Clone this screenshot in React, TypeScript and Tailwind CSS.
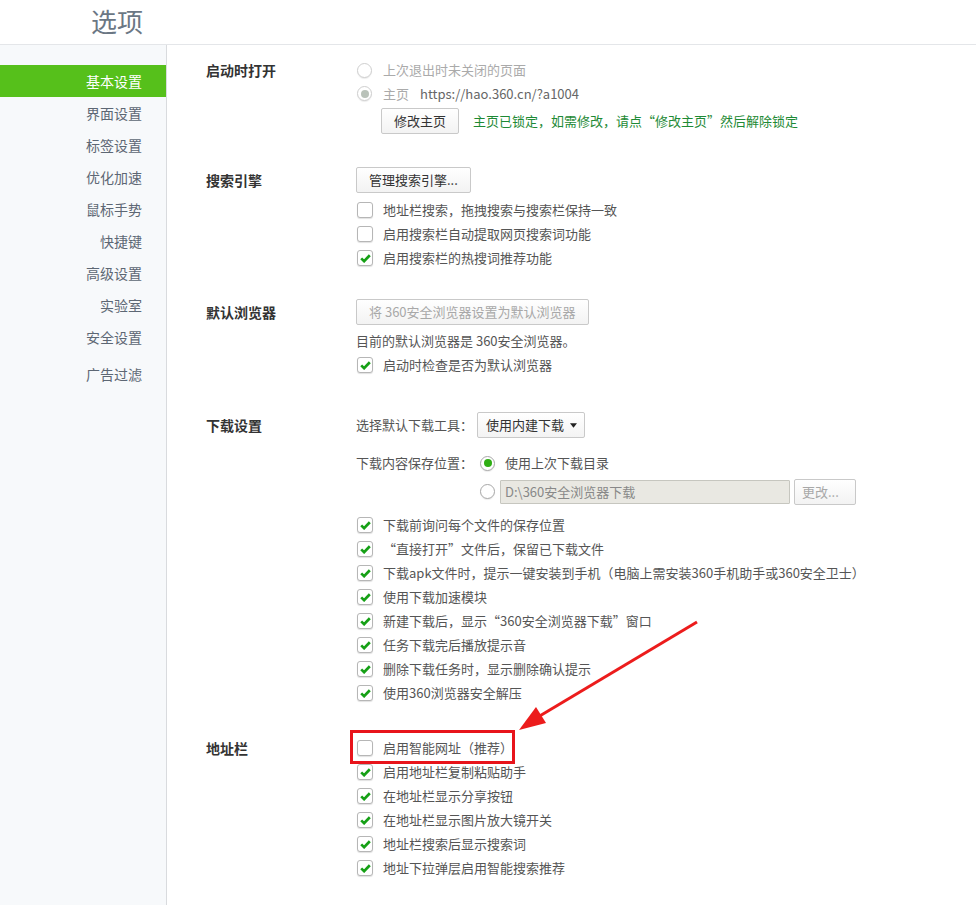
import React from 'react';

const FONT = { fontFamily: '"Microsoft YaHei", "Noto Sans CJK SC", "Noto Sans", sans-serif' };

const navItems = ['基本设置', '界面设置', '标签设置', '优化加速', '鼠标手势', '快捷键', '高级设置', '实验室', '安全设置'];

const downloadOptions = [
  '下载前询问每个文件的保存位置',
  '“直接打开”文件后，保留已下载文件',
  '下载apk文件时，提示一键安装到手机（电脑上需安装360手机助手或360安全卫士）',
  '使用下载加速模块',
  '新建下载后，显示“360安全浏览器下载”窗口',
  '任务下载完后播放提示音',
  '删除下载任务时，显示删除确认提示',
  '使用360浏览器安全解压',
];

const addressOptions = [
  '启用地址栏复制粘贴助手',
  '在地址栏显示分享按钮',
  '在地址栏显示图片放大镜开关',
  '地址栏搜索后显示搜索词',
  '地址下拉弹层启用智能搜索推荐',
];

const Checkbox: React.FC<{ checked?: boolean }> = ({ checked }) => (
  <span className="w-[16px] h-[16px] shrink-0 rounded-[3px] border border-[#b6b6b6] bg-white shadow-[0_1px_1px_rgba(0,0,0,0.12)] flex items-center justify-center">
    {checked && (
      <svg width="11" height="9" viewBox="0 0 11 9">
        <path d="M1.2 4.4 L4.1 7.2 L9.8 1.3" stroke="#16a016" strokeWidth="2.7" fill="none" />
      </svg>
    )}
  </span>
);

const Radio: React.FC<{ checked?: boolean; disabled?: boolean }> = ({ checked, disabled }) => (
  <span className={`w-[15px] h-[15px] shrink-0 rounded-full border ${disabled ? 'border-[#cfcfcf]' : 'border-[#a8a8a8]'} bg-white shadow-[0_1px_1px_rgba(0,0,0,0.08)] flex items-center justify-center`}>
    {checked && <span className={`w-[8px] h-[8px] rounded-full ${disabled ? 'bg-[#b9c2b9]' : 'bg-[#2fae14]'}`} />}
  </span>
);

const CheckRow: React.FC<{ checked?: boolean; text: string }> = ({ checked, text }) => (
  <div className="flex items-center h-[24px] pl-[1px]">
    <Checkbox checked={checked} />
    <span className="ml-[10px] text-[13px] text-[#555] whitespace-nowrap">{text}</span>
  </div>
);

const Btn: React.FC<{ children: React.ReactNode; className?: string; disabled?: boolean }> = ({ children, className = '', disabled }) => (
  <div className={`h-[26px] flex items-center rounded-[2px] border border-[#c9c9c9] bg-gradient-to-b from-white to-[#f3f3f3] text-[13px] whitespace-nowrap ${disabled ? 'text-[#a8a8a8]' : 'text-[#333]'} ${className}`}>
    {children}
  </div>
);

const Section: React.FC<{ title: string; className?: string; children: React.ReactNode; labelH?: string }> = ({ title, className = '', children, labelH = 'h-[24px]' }) => (
  <div className={`flex ${className}`}>
    <div className={`w-[150px] shrink-0 flex items-center ${labelH} text-[14px] font-bold text-[#333]`}>{title}</div>
    <div className="flex flex-col">{children}</div>
  </div>
);

export default function App() {
  return (
    <div className="relative w-[976px] h-[905px] overflow-hidden bg-white" style={FONT}>
      <div className="h-[45px] border-b border-[#e4e6e9] flex items-center pl-[91px] pb-[3px]">
        <span className="text-[26px] text-[#6b7784] leading-none">选项</span>
      </div>
      <div className="flex h-[860px]">
        <aside className="w-[167px] shrink-0 bg-[#f7f9fb] border-r border-[#d9dbde] pt-[20px]">
          {navItems.map((item, i) => (
            <div
              key={item}
              className={`h-[32px] flex items-center justify-end pr-[24px] text-[14px] ${i === 0 ? 'bg-[#56c01b] text-white' : 'text-[#5d6774]'}`}
            >
              {item}
            </div>
          ))}
          <div className="h-[32px] mt-[5px] flex items-center justify-end pr-[24px] text-[14px] text-[#5d6774]">广告过滤</div>
        </aside>

        <main className="flex-1 pl-[39px] pt-[13px]">
          <Section title="启动时打开">
            <div className="flex items-center h-[24px] pl-[1px]">
              <Radio disabled />
              <span className="ml-[11px] text-[13px] text-[#aaa]">上次退出时未关闭的页面</span>
            </div>
            <div className="flex items-center h-[23px] pl-[1px]">
              <Radio disabled checked />
              <span className="ml-[11px] text-[13px] text-[#aaa]">主页</span>
              <span className="ml-[11px] text-[13px] text-[#666]">https://hao.360.cn/?a1004</span>
            </div>
            <div className="flex items-center mt-[3px] pl-[25px]">
              <Btn className="px-[12px]">修改主页</Btn>
              <span className="ml-[14px] text-[13px] text-[#1e8a35]">主页已锁定，如需修改，请点“修改主页”然后解除锁定</span>
            </div>
          </Section>

          <Section title="搜索引擎" className="mt-[33px]" labelH="h-[26px]">
            <Btn className="px-[12px] w-[115px]">管理搜索引擎...</Btn>
            <div className="mt-[5px]">
              <CheckRow text="地址栏搜索，拖拽搜索与搜索栏保持一致" />
              <CheckRow text="启用搜索栏自动提取网页搜索词功能" />
              <CheckRow checked text="启用搜索栏的热搜词推荐功能" />
            </div>
          </Section>

          <Section title="默认浏览器" className="mt-[29px]" labelH="h-[26px]">
            <Btn disabled className="px-[12px] w-[233px]">将 360安全浏览器设置为默认浏览器</Btn>
            <div className="h-[24px] mt-[4px] flex items-center text-[13px] text-[#555]">目前的默认浏览器是 360安全浏览器。</div>
            <CheckRow checked text="启动时检查是否为默认浏览器" />
          </Section>

          <Section title="下载设置" className="mt-[35px]" labelH="h-[26px]">
            <div className="flex items-center h-[26px]">
              <span className="w-[121px] text-[13px] text-[#555]">选择默认下载工具：</span>
              <Btn className="pl-[8px] pr-[7px] w-[108px]">
                <span>使用内建下载</span>
                <svg className="ml-[6px]" width="8" height="5" viewBox="0 0 8 5">
                  <path d="M0 0 H8 L4 5 Z" fill="#222" />
                </svg>
              </Btn>
            </div>
            <div className="flex items-center h-[24px] mt-[13px]">
              <span className="w-[124px] text-[13px] text-[#555]">下载内容保存位置：</span>
              <Radio checked />
              <span className="ml-[10px] text-[13px] text-[#555]">使用上次下载目录</span>
            </div>
            <div className="flex items-center h-[25px] mt-[4px] pl-[124px]">
              <Radio />
              <div className="ml-[5px] w-[290px] h-[24px] flex items-center px-[4px] bg-[#e9e8e2] border border-[#c6c6bf] rounded-[1px] text-[13px] text-[#888]">
                D:\360安全浏览器下载
              </div>
              <Btn disabled className="ml-[4px] px-[7px] w-[62px] h-[25px]">更改...</Btn>
            </div>
            <div className="mt-[9px]">
              {downloadOptions.map((t) => (
                <CheckRow key={t} checked text={t} />
              ))}
            </div>
          </Section>

          <Section title="地址栏" className="mt-[31px]">
            <div className="relative">
              <CheckRow text="启用智能网址（推荐）" />
              <span className="absolute left-[-6px] top-[-6px] w-[165px] h-[34px] border-[3px] border-[#e8141b] pointer-events-none" />
            </div>
            {addressOptions.map((t) => (
              <CheckRow key={t} checked text={t} />
            ))}
          </Section>
        </main>
      </div>

      <svg className="absolute inset-0 pointer-events-none" width="976" height="905">
        <line x1="697" y1="622" x2="538" y2="717" stroke="#ec1c1c" strokeWidth="3" />
        <polygon points="519,730 546,723 536,707" fill="#ec1c1c" />
      </svg>
    </div>
  );
}
